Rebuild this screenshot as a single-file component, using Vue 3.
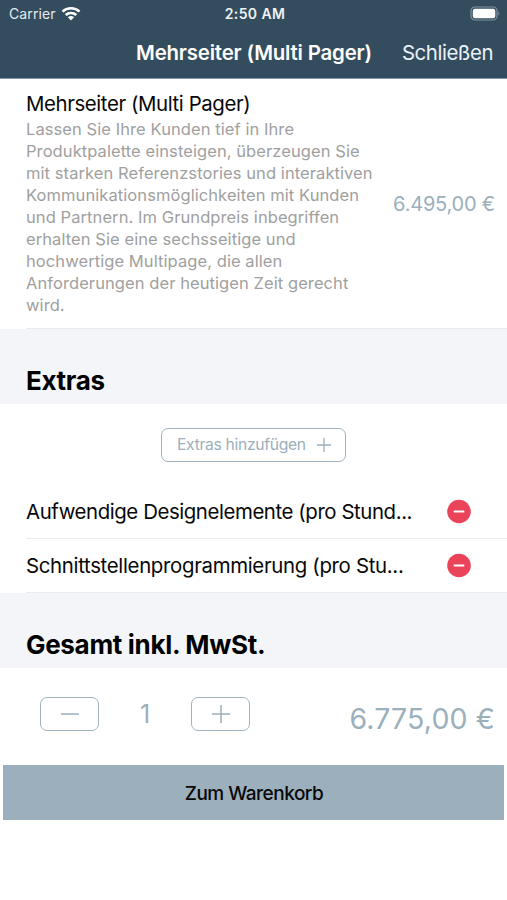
<script setup>
import { computed, ref } from 'vue'

const description = `Lassen Sie Ihre Kunden tief in Ihre
Produktpalette einsteigen, überzeugen Sie
mit starken Referenzstories und interaktiven
Kommunikationsmöglichkeiten mit Kunden
und Partnern. Im Grundpreis inbegriffen
erhalten Sie eine sechsseitige und
hochwertige Multipage, die allen
Anforderungen der heutigen Zeit gerecht
wird.`

const extras = ref([
  { id: 1, name: 'Aufwendige Designelemente (pro Stund...' },
  { id: 2, name: 'Schnittstellenprogrammierung (pro Stu...' },
])
const quantity = ref(1)
const total = computed(() =>
  (6775 * quantity.value).toFixed(2).replace('.', ',').replace(/\B(?=(\d{3})+,)/g, '.') + ' €'
)

function removeExtra(id) {
  extras.value = extras.value.filter((extra) => extra.id !== id)
}
</script>

<template>
  <main class="screen">
    <header>
      <div class="status">
        <div class="carrier">
          <span>Carrier</span>
          <svg width="20" height="14" viewBox="0 0 20 14" fill="none" stroke="#fff" stroke-width="2.5">
            <path d="M1.5 4.6C6.2.1 13.8.1 18.5 4.6" />
            <path d="M4.7 8C7.6 5.2 12.4 5.2 15.3 8" />
            <path d="M10 13.5 6.9 10.3C8.6 8.7 11.4 8.7 13.1 10.3Z" fill="#fff" stroke="none" />
          </svg>
        </div>
        <span class="time">2:50 AM</span>
        <svg class="battery" width="31" height="15" viewBox="0 0 31 15">
          <rect x="1" y="1" width="26" height="13" rx="4" fill="none" stroke="#8293a0" stroke-width="1.2" />
          <rect x="2.8" y="2.8" width="22.5" height="9.4" rx="2.2" fill="#fff" />
          <path d="M28.4 5.3q2 2.2 0 4.4Z" fill="#8293a0" />
        </svg>
      </div>
      <div class="nav">
        <h1>Mehrseiter (Multi Pager)</h1>
        <button class="close">Schließen</button>
      </div>
    </header>

    <section class="product">
      <div class="info">
        <h2>Mehrseiter (Multi Pager)</h2>
        <p>{{ description }}</p>
      </div>
      <span class="price">6.495,00 €</span>
    </section>

    <h3>Extras</h3>
    <section class="extras">
      <button class="add">
        <span>Extras hinzufügen</span>
        <svg width="14" height="14" viewBox="0 0 14 14" stroke="#9bafbc" stroke-width="1.3">
          <path d="M0 7H14M7 0V14" />
        </svg>
      </button>
      <ul>
        <li v-for="extra in extras" :key="extra.id">
          <span class="name">{{ extra.name }}</span>
          <button class="remove" @click="removeExtra(extra.id)">
            <svg width="24" height="24" viewBox="0 0 24 24">
              <circle cx="12" cy="11.5" r="11.8" fill="#eb445a" />
              <path d="M6.7 11.5H17.3" stroke="#fff" stroke-width="2" />
            </svg>
          </button>
        </li>
      </ul>
    </section>

    <h3>Gesamt inkl. MwSt.</h3>
    <section class="summary">
      <button class="step" @click="quantity = Math.max(1, quantity - 1)">
        <svg width="18" height="18" viewBox="0 0 18 18" stroke="#9bafbc" stroke-width="1.5">
          <path d="M0 9H18" />
        </svg>
      </button>
      <span class="quantity">{{ quantity }}</span>
      <button class="step" @click="quantity++">
        <svg width="18" height="18" viewBox="0 0 18 18" stroke="#9bafbc" stroke-width="1.5">
          <path d="M0 9H18M9 0V18" />
        </svg>
      </button>
      <span class="total">{{ total }}</span>
    </section>
    <button class="cart">Zum Warenkorb</button>
  </main>
</template>

<style>
body {
  background: #fff;
}
</style>

<style scoped>
* {
  box-sizing: border-box;
  margin: 0;
  padding: 0;
}

.screen {
  width: 507px;
  height: 900px;
  overflow: hidden;
  background: #fff;
  color: #080808;
  font-family: Inter, sans-serif;
}

button {
  border: 0;
  background: none;
  color: inherit;
  font: inherit;
}

svg {
  display: block;
  overflow: visible;
}

span,
h1,
h2,
.close {
  white-space: nowrap;
}

header {
  height: 79px;
  background: #344d5e;
  border-bottom: 1px solid #7d969f;
  color: #fff;
}

.status {
  display: grid;
  grid-template-columns: 1fr auto 1fr;
  align-items: center;
  height: 27px;
  padding: 0 6px 0 9px;
}

.carrier {
  display: flex;
  align-items: center;
  gap: 5px;
  font-size: 14px;
  letter-spacing: 0.1px;
  color: #e5eaef;
}

.time {
  font-size: 14px;
  font-weight: 600;
  letter-spacing: 0.4px;
  color: #eef2f5;
}

.battery {
  justify-self: end;
}

.nav {
  display: flex;
  align-items: center;
  justify-content: space-between;
  height: 51px;
  padding: 0 14px 0 136px;
}

.nav h1 {
  font-size: 20.4px;
  font-weight: 600;
  letter-spacing: -0.17px;
}

.close {
  font-size: 20.4px;
  letter-spacing: -0.45px;
  color: #eaf2fa;
}

.product {
  display: flex;
  align-items: center;
  justify-content: space-between;
  height: 250px;
  margin-left: 26px;
  padding-right: 12px;
  border-bottom: 1px solid #e8ebed;
}

.info {
  align-self: flex-start;
  padding-top: 12px;
}

.info h2 {
  font-size: 20.4px;
  font-weight: 400;
  letter-spacing: -0.4px;
  line-height: 26px;
}

.info p {
  padding-top: 1px;
  font-size: 16.5px;
  letter-spacing: 0.08px;
  line-height: 22px;
  color: #a0a0a0;
  white-space: pre;
}

.price {
  padding-top: 1px;
  font-size: 20px;
  letter-spacing: -0.2px;
  color: #9bafbc;
}

h3 {
  height: 75px;
  padding: 35px 26px 0;
  background: #f4f5f9;
  font-size: 26px;
  font-weight: 700;
  letter-spacing: -0.32px;
  line-height: 34px;
  color: #000;
}

.extras {
  height: 189px;
  padding-top: 24px;
}

.add {
  display: flex;
  align-items: center;
  justify-content: space-between;
  width: 185px;
  height: 34px;
  margin: 0 auto;
  padding: 0 14px 1px 15px;
  border: 1px solid #9fb3bf;
  border-radius: 7px;
  font-size: 15.7px;
  letter-spacing: -0.32px;
  color: #9bafbc;
}

ul {
  margin-top: 23px;
  list-style: none;
}

li {
  display: flex;
  align-items: center;
  justify-content: space-between;
  height: 54px;
  margin-left: 26px;
  padding-right: 36px;
  border-bottom: 1px solid #e9ebee;
  font-size: 20.4px;
  letter-spacing: -0.42px;
}

li:last-child {
  letter-spacing: -0.32px;
}

.summary {
  display: flex;
  align-items: center;
  height: 97px;
  padding: 0 12px 5px 40px;
  color: #9bafbc;
}

.step {
  display: flex;
  align-items: center;
  justify-content: center;
  width: 59px;
  height: 34px;
  border: 1px solid #9fb3bf;
  border-radius: 7px;
}

.quantity {
  width: 92px;
  padding-bottom: 1px;
  font-size: 25px;
  text-align: center;
}

.total {
  margin-left: auto;
  padding-top: 8px;
  font-size: 28.5px;
  letter-spacing: 0.15px;
}

.cart {
  display: block;
  width: 501px;
  height: 55px;
  margin-left: 3px;
  padding: 2px 0 0 1px;
  background: #9bafbc;
  font-size: 19px;
  font-weight: 500;
  letter-spacing: -0.5px;
}
</style>
